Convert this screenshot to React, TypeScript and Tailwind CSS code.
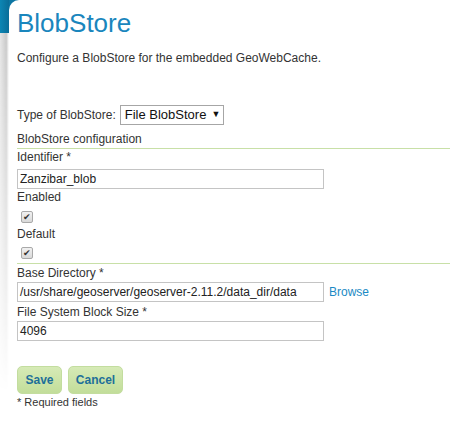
import React from "react";

function Check() {
    return (
        <div className="w-[12px] h-[12px] rounded-[2px] border border-[#a9a9a9] bg-[linear-gradient(#f1f1f1,#d9d9d9)] flex items-center justify-center text-[9px] leading-none text-[#333]">
            ✔
        </div>
    )
}

function Field({ label, value, browse, gap }: { label: string, value: string, browse?: boolean, gap: string }) {
    return (
        <div>
            <div className="text-[12px] leading-[14px] text-[#333]">{label}</div>
            <div className={"flex items-center " + gap}>
                <div className="w-[307px] h-[20px] border border-[#c4c4c4] bg-white px-[2px] text-[12px] leading-[18px] text-[#222] whitespace-nowrap">
                    {value}
                </div>
                {browse && <a className="ml-[5px] text-[12px] text-[#1b8ac4]">Browse</a>}
            </div>
        </div>
    )
}

export default function App() {
    return (
        <div className="w-[450px] h-[441px] flex bg-[linear-gradient(to_bottom,#0c76a3_0,#0c76a3_33px,transparent_33px)] font-['Liberation_Sans',Arial,sans-serif] overflow-hidden">
            <div className="w-[9px] shrink-0 flex flex-col">
                <div className="h-[33px] bg-[linear-gradient(to_right,#0d86b4,#0a6d98)]"></div>
                <div className="flex-1 bg-[linear-gradient(to_right,#e6e6e6,#c9c9c9_70%,#ffffff)] [mask-image:linear-gradient(to_bottom,black,transparent_360px)]"></div>
            </div>
            <div className="flex-1 bg-white rounded-tl-[10px] pl-[8px] pt-[8px]">
                <h1 className="text-[26px] leading-[30px] text-[#1a86bd]">BlobStore</h1>
                <p className="mt-[13px] text-[12px] leading-[14px] text-[#333]">Configure a BlobStore for the embedded GeoWebCache.</p>

                <div className="mt-[40px] flex items-center text-[12px] text-[#333]">
                    <span>Type of BlobStore:</span>
                    <div className="ml-[4px] h-[20px] w-[104px] border border-[#a6a6a6] bg-white flex items-center pl-[4px] text-[13px] text-[#111] whitespace-nowrap">
                        File BlobStore <span className="ml-[5px] text-[9px]">▼</span>
                    </div>
                </div>

                <div className="mt-[7px] text-[12px] leading-[15px] text-[#333]">BlobStore configuration</div>
                <div className="mt-[1px] h-px bg-[#c8e0a7]"></div>

                <div className="mt-[1px]">
                    <Field label="Identifier *" value="Zanzibar_blob" gap="mt-[5px]" />
                    <div className="mt-[1px] text-[12px] leading-[14px] text-[#333]">Enabled</div>
                    <div className="pl-[4px] mt-[7px]"><Check /></div>
                    <div className="mt-[4px] text-[12px] leading-[14px] text-[#333]">Default</div>
                    <div className="pl-[4px] mt-[6px]"><Check /></div>
                </div>
                <div className="mt-[4px] h-px bg-[#c8e0a7]"></div>

                <div className="mt-[2px] space-y-[3px]">
                    <Field label="Base Directory *" value="/usr/share/geoserver/geoserver-2.11.2/data_dir/data" browse gap="mt-[2px]" />
                    <Field label="File System Block Size *" value="4096" gap="mt-[2px]" />
                </div>

                <div className="mt-[25px] flex gap-[6px]">
                    <button className="h-[28px] w-[45px] rounded-[5px] border border-[#c3dd9f] bg-[linear-gradient(#d6eab6,#c2dd9a)] text-[12px] font-bold text-[#1e6f99]">Save</button>
                    <button className="h-[28px] w-[55px] rounded-[5px] border border-[#c3dd9f] bg-[linear-gradient(#d6eab6,#c2dd9a)] text-[12px] font-bold text-[#1e6f99]">Cancel</button>
                </div>
                <div className="mt-[2px] text-[11px] leading-[13px] text-[#333]">* Required fields</div>
            </div>
        </div>
    )
}
